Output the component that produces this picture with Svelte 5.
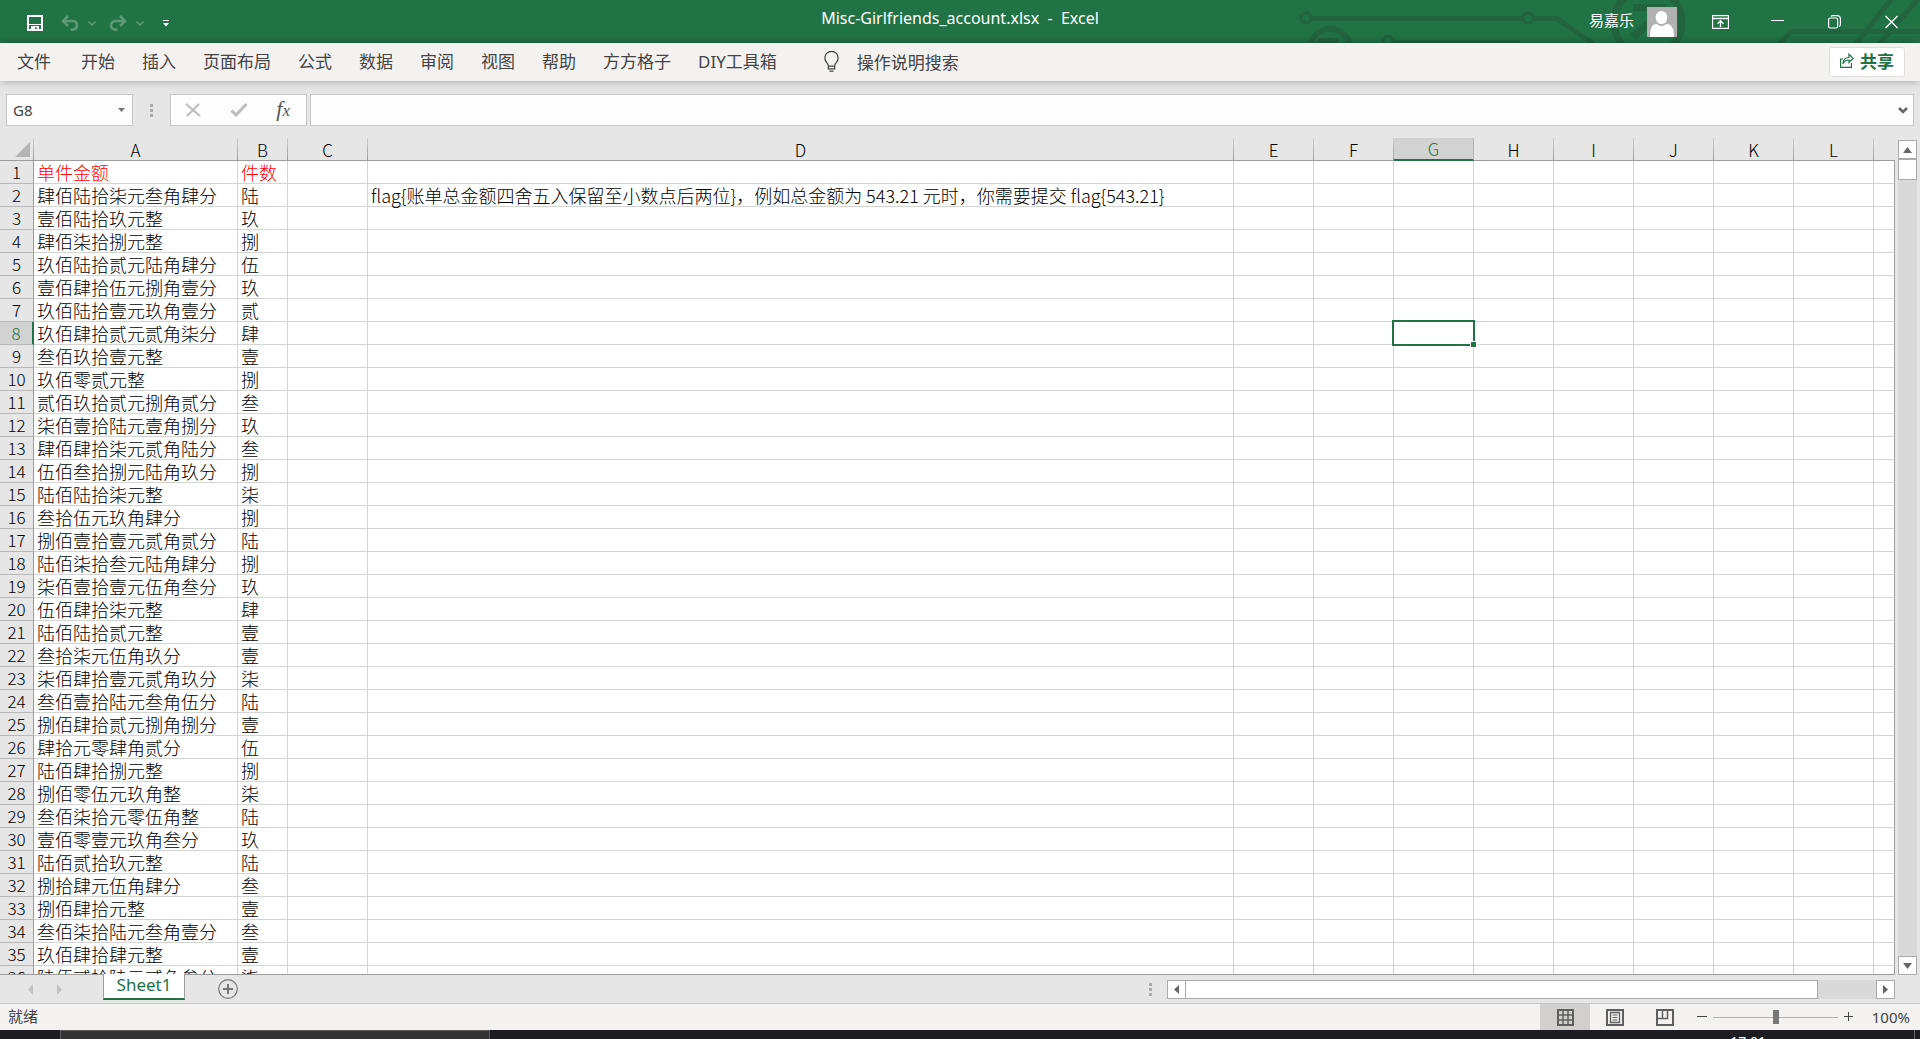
<script lang="ts">
	const tabs = ['开始', '插入', '页面布局', '公式', '数据', '审阅', '视图', '帮助', '方方格子', 'DIY工具箱'];

	const columns = ['A', 'B', 'C', 'D', 'E', 'F', 'G', 'H', 'I', 'J', 'K', 'L', ''];

	const note = 'flag{账单总金额四舍五入保留至小数点后两位}，例如总金额为 543.21 元时，你需要提交 flag{543.21}';

	const rows: [string, string][] = [
		['单件金额', '件数'],
		['肆佰陆拾柒元叁角肆分', '陆'],
		['壹佰陆拾玖元整', '玖'],
		['肆佰柒拾捌元整', '捌'],
		['玖佰陆拾贰元陆角肆分', '伍'],
		['壹佰肆拾伍元捌角壹分', '玖'],
		['玖佰陆拾壹元玖角壹分', '贰'],
		['玖佰肆拾贰元贰角柒分', '肆'],
		['叁佰玖拾壹元整', '壹'],
		['玖佰零贰元整', '捌'],
		['贰佰玖拾贰元捌角贰分', '叁'],
		['柒佰壹拾陆元壹角捌分', '玖'],
		['肆佰肆拾柒元贰角陆分', '叁'],
		['伍佰叁拾捌元陆角玖分', '捌'],
		['陆佰陆拾柒元整', '柒'],
		['叁拾伍元玖角肆分', '捌'],
		['捌佰壹拾壹元贰角贰分', '陆'],
		['陆佰柒拾叁元陆角肆分', '捌'],
		['柒佰壹拾壹元伍角叁分', '玖'],
		['伍佰肆拾柒元整', '肆'],
		['陆佰陆拾贰元整', '壹'],
		['叁拾柒元伍角玖分', '壹'],
		['柒佰肆拾壹元贰角玖分', '柒'],
		['叁佰壹拾陆元叁角伍分', '陆'],
		['捌佰肆拾贰元捌角捌分', '壹'],
		['肆拾元零肆角贰分', '伍'],
		['陆佰肆拾捌元整', '捌'],
		['捌佰零伍元玖角整', '柒'],
		['叁佰柒拾元零伍角整', '陆'],
		['壹佰零壹元玖角叁分', '玖'],
		['陆佰贰拾玖元整', '陆'],
		['捌拾肆元伍角肆分', '叁'],
		['捌佰肆拾元整', '壹'],
		['叁佰柒拾陆元叁角壹分', '叁'],
		['玖佰肆拾肆元整', '壹'],
		['陆佰贰拾陆元贰角叁分', '柒']
	];

	let selectedCol = $state('G');
	let selectedRow = $state(8);
	let formula = $state('');
	let zoom = $state(100);

	const cellName = $derived(selectedCol + selectedRow);

	function cellText(row: number, col: string) {
		if (col === 'A') return rows[row - 1][0];
		if (col === 'B') return rows[row - 1][1];
		if (col === 'D' && row === 2) return note;
		return '';
	}

	function select(row: number, col: string) {
		if (!col) return;
		selectedRow = row;
		selectedCol = col;
		formula = cellText(row, col);
	}
</script>

<div class="window">
	<header class="titlebar">
		<svg class="circuit" width="640" height="43" viewBox="0 0 640 43" fill="none" stroke="#21643f" stroke-width="5" aria-hidden="true">
			<circle cx="26" cy="18" r="5" stroke-width="3" />
			<path d="M31 18.500H243" />
			<circle cx="248" cy="18" r="5" stroke-width="3" />
			<path d="M253 18.500H277L315 45" />
			<circle cx="50" cy="49" r="20" stroke-width="6" />
			<path d="M38 41H59" stroke-width="6" />
			<circle cx="108" cy="41" r="5" stroke-width="3" />
			<path d="M113 42.500H240" />
			<circle cx="368" cy="22" r="34" stroke-width="7" />
			<path d="M353 7.500H386" stroke-width="7" />
			<path d="M386 8L353 37" stroke-width="8" />
			<path d="M498 45L511 31.500H640" />
			<path d="M575 45L613 -3M598 45L640 -3" />
		</svg>

		<div class="quick">
			<button aria-label="保存">
				<svg width="16" height="16" viewBox="0 0 16 16" fill="none" stroke="#fff">
					<path d="M1 1H15V15H1Z" stroke-width="2" />
					<path d="M1.500 9.500H14.500" stroke-width="1" />
					<path d="M4 11H12V15H10V12.500H8V15H4Z" fill="#fff" stroke="none" />
				</svg>
			</button>
			<button class="dim undo" aria-label="撤消">
				<svg width="18" height="16" viewBox="0 0 18 16" fill="none" stroke="currentColor" stroke-width="2.600">
					<path d="M7 1L2 6L7 11M2 6H11Q16 6 16 10.500Q16 14.700 9.500 14.700" />
				</svg>
			</button>
			<button class="dim" aria-label="撤消选项">
				<svg width="8" height="5" viewBox="0 0 8 5" fill="none" stroke="currentColor" stroke-width="1.500"><path d="M.5 .5L4 4L7.500 .5" /></svg>
			</button>
			<button class="dim redo" aria-label="恢复">
				<svg width="18" height="16" viewBox="0 0 18 16" fill="none" stroke="currentColor" stroke-width="2.600">
					<path d="M11 1L16 6L11 11M16 6H7Q2 6 2 10.500Q2 14.700 8.500 14.700" />
				</svg>
			</button>
			<button class="dim" aria-label="恢复选项">
				<svg width="8" height="5" viewBox="0 0 8 5" fill="none" stroke="currentColor" stroke-width="1.500"><path d="M.5 .5L4 4L7.500 .5" /></svg>
			</button>
			<button class="customize" aria-label="自定义快速访问工具栏">
				<svg width="6" height="7" viewBox="0 0 6 7" fill="#fff"><path d="M0 0H6V1H0ZM0 3H6L3 6.500Z" /></svg>
			</button>
		</div>

		<h1>Misc-Girlfriends_account.xlsx  -  Excel</h1>

		<div class="account">
			<span class="user">易嘉乐</span>
			<svg class="avatar" width="30" height="30" viewBox="0 0 30 30" aria-hidden="true">
				<rect width="30" height="30" fill="#b1b1b1" />
				<ellipse cx="14.500" cy="10.500" rx="5.800" ry="6.600" fill="#fff" />
				<path d="M3 30Q3 17 9.500 17Q14.500 21 19.500 17Q27 17 27 30Z" fill="#fff" />
			</svg>
			<button class="win" aria-label="功能区显示选项">
				<svg width="17" height="14" viewBox="0 0 17 14" fill="none" stroke="#fff">
					<path d="M.5 .5H16.500V13.500H.5Z" stroke-width="1.300" />
					<path d="M1 3.500H16M8.500 12V6M5.500 8.700L8.500 5.700L11.500 8.700" stroke-width="1.300" />
				</svg>
			</button>
			<button class="win" aria-label="最小化">
				<svg width="13" height="14" viewBox="0 0 13 14" stroke="#fff"><path d="M0 5.500H13" /></svg>
			</button>
			<button class="win" aria-label="向下还原">
				<svg width="13" height="14" viewBox="0 0 13 14" fill="none" stroke="#fff" stroke-width="1.200">
					<rect x=".6" y="3" width="9" height="10" rx="1.500" />
					<path d="M3 1.500Q3.500 .6 5 .6H9Q12.400 .6 12.400 4V9.500Q12.400 11 11 11.500" />
				</svg>
			</button>
			<button class="win" aria-label="关闭">
				<svg width="13" height="14" viewBox="0 0 13 14" stroke="#fff" stroke-width="1.200"><path d="M.5 1L12.500 13M12.500 1L.5 13" /></svg>
			</button>
		</div>
	</header>

	<nav class="ribbon">
		<button class="file">文件</button>
		{#each tabs as tab}
			<button>{tab}</button>
		{/each}
		<button class="tell">
			<svg width="17" height="21" viewBox="0 0 15 20" fill="none" stroke="#444" stroke-width="1.200">
				<path d="M4.500 14.500Q4.500 12.500 2.800 10.800A6.300 6.300 0 1 1 12.200 10.800Q10.500 12.500 10.500 14.500ZM4.500 14.500V17H10.500V14.500M5.500 19.200H9.500" />
			</svg>
			操作说明搜索
		</button>
		<button class="share">
			<svg width="14" height="15" viewBox="0 0 14 15" fill="none" stroke="#217346" stroke-width="1.200">
				<path d="M3 6H.6V14.400H11.400V10" />
				<path d="M3 11Q3.200 4.500 9 4.500V1.200L13.200 5.500L9 9.500V7Q5 7 3 11Z" />
			</svg>
			共享
		</button>
	</nav>

	<div class="formula-bar">
		<div class="name-box">
			<input aria-label="名称框" value={cellName} />
			<button aria-label="名称列表">
				<svg width="7" height="4" viewBox="0 0 7 4" fill="#777"><path d="M0 0H7L3.500 4Z" /></svg>
			</button>
		</div>
		<svg class="grip" width="3" height="13" viewBox="0 0 3 13" fill="#ababab" aria-hidden="true"><path d="M0 0H3V3H0ZM0 5H3V8H0ZM0 10H3V13H0Z" /></svg>
		<div class="fx-box">
			<button aria-label="取消">
				<svg width="16" height="14" viewBox="0 0 16 14" fill="none" stroke="#bdbdbd" stroke-width="2"><path d="M1 1L15 13M14 1L2 13" /></svg>
			</button>
			<button aria-label="输入">
				<svg width="18" height="14" viewBox="0 0 18 14" fill="none" stroke="#bdbdbd" stroke-width="3"><path d="M1.500 7.500L6 12L16.500 1" /></svg>
			</button>
			<button class="fx" aria-label="插入函数"><i>f</i><i class="x">x</i></button>
		</div>
		<div class="formula">
			<input aria-label="编辑栏" bind:value={formula} />
			<button aria-label="展开编辑栏">
				<svg width="10" height="7" viewBox="0 0 10 7" fill="none" stroke="#666" stroke-width="2.600"><path d="M1 1L5 5L9 1" /></svg>
			</button>
		</div>
	</div>

	<main>
		<div class="sheet">
			<table>
				<colgroup>
					<col class="w-num" />
					<col class="w-a" />
					<col class="w-b" />
					<col class="w-std" />
					<col />
					{#each columns.slice(4, 12) as _}
						<col class="w-std" />
					{/each}
					<col class="w-rest" />
				</colgroup>
				<thead>
					<tr>
						<th class="corner">
							<svg width="15" height="15" viewBox="0 0 15 15" fill="#b4b4b4" aria-hidden="true"><path d="M15 0V15H0Z" /></svg>
						</th>
						{#each columns as col}
							<th scope="col" class:active={col === selectedCol}>{col}</th>
						{/each}
					</tr>
				</thead>
				<tbody>
					{#each rows as _, i}
						<tr>
							<th scope="row" class:active={i + 1 === selectedRow}>{i + 1}</th>
							{#each columns as col}
								{@const current = i + 1 === selectedRow && col === selectedCol}
								<td class:title={i === 0} class:current onclick={() => select(i + 1, col)}>
									{cellText(i + 1, col)}{#if current}<span class="handle"></span>{/if}
								</td>
							{/each}
						</tr>
					{/each}
				</tbody>
			</table>
		</div>
		<div class="vscroll">
			<button aria-label="向上滚动"><svg width="9" height="6" viewBox="0 0 9 6" fill="#666"><path d="M4.500 0L9 6H0Z" /></svg></button>
			<div class="thumb"></div>
			<button class="end" aria-label="向下滚动"><svg width="9" height="6" viewBox="0 0 9 6" fill="#666"><path d="M0 0H9L4.500 6Z" /></svg></button>
		</div>
	</main>

	<div class="sheet-bar">
		<div class="sheet-nav">
			<button aria-label="上一张工作表"><svg width="5" height="11" viewBox="0 0 5 11" fill="#c3c3c3"><path d="M5 0V11L0 5.500Z" /></svg></button>
			<button aria-label="下一张工作表"><svg width="5" height="11" viewBox="0 0 5 11" fill="#c3c3c3"><path d="M0 0V11L5 5.500Z" /></svg></button>
		</div>
		<button class="sheet-tab">Sheet1</button>
		<button class="add" aria-label="新工作表">
			<svg width="20" height="20" viewBox="0 0 20 20" fill="none" stroke="#777">
				<circle cx="10" cy="10" r="9.300" stroke-width="1.200" />
				<path d="M10 5V15M5 10H15" stroke-width="2" />
			</svg>
		</button>
		<svg class="split" width="3" height="13" viewBox="0 0 3 13" fill="#ababab" aria-hidden="true"><path d="M0 0H3V3H0ZM0 5H3V8H0ZM0 10H3V13H0Z" /></svg>
		<div class="hscroll">
			<button aria-label="向左滚动"><svg width="5" height="9" viewBox="0 0 5 9" fill="#666"><path d="M5 0V9L0 4.500Z" /></svg></button>
			<div class="thumb"></div>
			<button class="end" aria-label="向右滚动"><svg width="5" height="9" viewBox="0 0 5 9" fill="#666"><path d="M0 0V9L5 4.500Z" /></svg></button>
		</div>
	</div>

	<footer class="status">
		<span class="ready">就绪</span>
		<button class="view on" aria-label="普通">
			<svg width="17" height="17" viewBox="0 0 17 17" fill="none" stroke="#5f5f5f"><path d="M1 1H16V16H1Z" stroke-width="2" /><path d="M6 1V16M11 1V16M1 6H16M1 11H16" stroke-width="1.500" /></svg>
		</button>
		<button class="view" aria-label="页面布局">
			<svg width="18" height="17" viewBox="0 0 18 17" fill="none" stroke="#5f5f5f"><path d="M1 1H17V16H1Z" stroke-width="2" /><path d="M4.500 3.500H13.500V13.500H4.500Z" stroke-width="1.300" /><path d="M6.500 6H11.500M6.500 8.500H11.500M6.500 11H11.500" /></svg>
		</button>
		<button class="view" aria-label="分页预览">
			<svg width="18" height="17" viewBox="0 0 18 17" fill="none" stroke="#5f5f5f"><path d="M1 1H17V16H1Z" stroke-width="2" /><path d="M1 9.500H11.500V1M6.500 1V9.500" stroke-width="1.500" /></svg>
		</button>
		<button class="step" aria-label="缩小"><svg width="10" height="10" viewBox="0 0 10 10" stroke="#444"><path d="M0 4.500H10" /></svg></button>
		<input type="range" min="0" max="200" aria-label="显示比例" bind:value={zoom} />
		<button class="step" aria-label="放大"><svg width="10" height="10" viewBox="0 0 10 10" stroke="#444"><path d="M0 4.500H9M4.500 0V9" /></svg></button>
		<button class="percent">{zoom}%</button>
	</footer>

	<div class="taskbar">
		<div class="task"></div>
		<span class="clock">17:01</span>
		<div class="desktop"></div>
	</div>
</div>

<style>
	:global(body) {
		margin: 0;
	}

	.window {
		display: flex;
		flex-direction: column;
		height: 100vh;
		overflow: hidden;
		background: #e6e6e6;
		color: #444;
		font-family: 'Noto Sans', 'Noto Sans CJK SC', sans-serif;
		font-size: 15px;
	}

	.window * {
		box-sizing: border-box;
	}

	svg {
		display: block;
		flex: none;
	}

	button {
		display: flex;
		align-items: center;
		justify-content: center;
		margin: 0;
		padding: 0;
		border: 0;
		background: none;
		color: inherit;
		font: inherit;
		white-space: nowrap;
	}

	input {
		min-width: 0;
		margin: 0;
		padding: 0;
		border: 0;
		outline: 0;
		background: none;
		color: inherit;
		font: inherit;
	}

	/* title bar */
	.titlebar {
		position: relative;
		display: grid;
		grid-template-columns: 1fr auto 1fr;
		flex: none;
		height: 43px;
		background: #217346;
		color: #fff;
	}

	.circuit {
		position: absolute;
		top: 0;
		right: 0;
	}

	.quick {
		display: flex;
		align-items: center;
		gap: 9px;
		padding: 3px 0 0 27px;
	}

	.dim {
		color: #5a9a76;
	}

	.undo {
		margin-left: 9px;
	}

	.redo {
		margin-left: 4px;
	}

	.customize {
		margin-left: 10px;
	}

	h1 {
		margin: 0;
		font-size: 16px;
		font-weight: 400;
		line-height: 36px;
		white-space: pre;
	}

	.account {
		position: relative;
		display: flex;
		align-items: center;
		justify-content: flex-end;
	}

	.user {
		padding-bottom: 4px;
	}

	.avatar {
		margin: 0 15px 0 13px;
	}

	.win {
		width: 57px;
		height: 43px;
	}

	/* ribbon tabs */
	.ribbon {
		position: relative;
		display: flex;
		align-items: center;
		gap: 27px;
		flex: none;
		height: 38px;
		padding: 0 15px 0 17px;
		background: #f3f2f1;
		box-shadow: 0 0 9px rgba(0, 0, 0, 0.3);
		font-size: 17px;
	}

	.ribbon button {
		padding-bottom: 3px;
	}

	.file {
		margin-right: 3px;
	}

	.ribbon .tell {
		gap: 17px;
		margin-left: 19px;
		padding-bottom: 1px;
	}

	.share {
		gap: 6px;
		width: 76px;
		height: 30px;
		margin-left: auto;
		border: 1px solid #e1dfdd;
		border-radius: 3px;
		background: #fff;
		color: #217346;
		font-weight: 700;
	}

	/* formula bar */
	.formula-bar {
		display: flex;
		align-items: center;
		flex: none;
		padding: 13px 6px 12px;
	}

	.name-box,
	.fx-box,
	.formula {
		display: flex;
		align-items: center;
		height: 32px;
		border: 1px solid #c6c6c6;
		background: #fdfdfd;
	}

	.name-box {
		width: 127px;
		padding: 0 7px 0 6px;
	}

	.name-box input {
		flex: 1;
	}

	.grip {
		margin: 0 17px;
	}

	.fx-box {
		justify-content: space-between;
		width: 137px;
		padding: 0 16px 0 14px;
	}

	.fx {
		align-items: baseline;
		color: #555;
		font-family: 'Liberation Serif', serif;
		font-size: 22px;
		line-height: 24px;
	}

	.x {
		font-size: 17px;
	}

	.formula {
		flex: 1;
		margin-left: 3px;
		padding: 0 5px 0 6px;
	}

	.formula input {
		flex: 1;
	}

	/* grid */
	main {
		display: flex;
		flex: 1;
		gap: 3px;
		min-height: 0;
		padding-right: 3px;
	}

	.sheet {
		flex: 1;
		min-width: 0;
		overflow: hidden;
		border-bottom: 1px solid #9b9b9b;
		font-family: 'Noto Sans CJK SC', sans-serif;
	}

	table {
		width: 100%;
		table-layout: fixed;
		border-collapse: separate;
		border-spacing: 0;
	}

	.w-num {
		width: 34px;
	}

	.w-a {
		width: 204px;
	}

	.w-b {
		width: 50px;
	}

	.w-std {
		width: 80px;
	}

	.w-rest {
		width: 21px;
	}

	th {
		height: 23px;
		padding: 0;
		background: #e6e6e6;
		color: #000;
		font-size: 17px;
		font-weight: 300;
		line-height: 20px;
	}

	thead th {
		padding-top: 2px;
		border-right: 1px solid;
		border-bottom: 1px solid #9b9b9b;
		border-image: linear-gradient(#d0d0d0, #9b9b9b) 1;
	}

	thead th:last-child {
		border-right: 0;
		border-image: none;
	}

	thead .corner {
		padding: 0 3px 3px 0;
		vertical-align: bottom;
	}

	.corner svg {
		margin-left: auto;
	}

	tbody th {
		border-right: 1px solid #9b9b9b;
		border-bottom: 1px solid #b8b8b8;
	}

	.active {
		background: #d2d2d2;
		color: #217346;
	}

	thead .active {
		padding-top: 1px;
		border-bottom: 2px solid #217346;
		border-image: none;
		border-right-color: #b1b1b1;
	}

	tbody .active {
		border-right: 2px solid #217346;
	}

	td {
		height: 23px;
		padding: 0 0 0 3px;
		border-right: 1px solid #d4d4d4;
		border-bottom: 1px solid #d4d4d4;
		background: #fff;
		color: #000;
		font-size: 18px;
		font-weight: 300;
		line-height: 20px;
		white-space: nowrap;
	}

	td:last-child {
		border-right-color: #9b9b9b;
	}

	.title {
		color: #f00;
	}

	.current {
		position: relative;
	}

	.current::after {
		position: absolute;
		inset: -2px;
		border: 2px solid #217346;
		content: '';
	}

	.handle {
		position: absolute;
		right: -3px;
		bottom: -3px;
		z-index: 1;
		width: 5px;
		height: 5px;
		background: #217346;
		box-shadow: 0 0 0 1px #fff;
	}

	/* scroll bars */
	.vscroll,
	.hscroll {
		display: flex;
		background: #d9d9d9;
	}

	.vscroll {
		flex-direction: column;
		width: 19px;
		margin-top: 2px;
	}

	.vscroll button,
	.hscroll button {
		flex: none;
		width: 19px;
		height: 19px;
		border: 1px solid #ababab;
		background: #fff;
	}

	.thumb {
		border: 1px solid #ababab;
		background: #fff;
	}

	.vscroll .thumb {
		height: 21px;
	}

	.vscroll .end {
		margin-top: auto;
	}

	/* sheet tabs */
	.sheet-bar {
		display: flex;
		align-items: center;
		flex: none;
		height: 28px;
		padding-right: 25px;
	}

	.sheet-nav {
		display: flex;
		gap: 24px;
		width: 103px;
		padding-left: 28px;
	}

	.sheet-tab {
		position: relative;
		align-self: flex-start;
		width: 82px;
		height: 26px;
		margin-top: -1px;
		padding-bottom: 2px;
		border: 1px solid #9b9b9b;
		border-top: 0;
		border-bottom: 2px solid #217346;
		background: #fff;
		color: #217346;
		font-size: 17px;
		line-height: 20px;
	}

	.add {
		margin-left: 33px;
	}

	.split {
		margin-left: auto;
		margin-right: 15px;
	}

	.hscroll {
		width: 728px;
	}

	.hscroll .thumb {
		width: 87%;
		margin-left: -1px;
	}

	.hscroll .end {
		margin-left: auto;
	}

	/* status bar */
	.status {
		display: flex;
		align-items: center;
		flex: none;
		height: 27px;
		padding: 0 10px 0 8px;
		border-top: 1px solid #c6c6c6;
		background: #f3f2f1;
	}

	.ready {
		margin-right: auto;
		padding-bottom: 3px;
	}

	.view {
		width: 50px;
		height: 26px;
	}

	.on {
		background: #d2d0ce;
	}

	.step {
		margin-left: 7px;
	}

	.status input {
		width: 125px;
		height: 14px;
		margin: 0 -1px 0 6px;
		appearance: none;
		background: linear-gradient(#b1b1b1, #b1b1b1) center / 100% 1px no-repeat;
	}

	.status input::-webkit-slider-thumb {
		width: 6px;
		height: 14px;
		appearance: none;
		background: #777;
	}

	.percent {
		justify-content: flex-end;
		width: 56px;
	}

	/* taskbar edge */
	.taskbar {
		display: flex;
		flex: none;
		height: 9px;
		overflow: hidden;
		background: #1c1c21;
		color: #fff;
	}

	.task {
		width: 430px;
		margin-left: 60px;
		border: 1px solid #5a5a5a;
		border-bottom: 0;
		background: #333;
	}

	.clock {
		margin-left: auto;
		padding-top: 3px;
		font-size: 14px;
		line-height: 18px;
	}

	.desktop {
		width: 6px;
		margin-left: 148px;
		border-left: 1px solid #666;
	}
</style>
